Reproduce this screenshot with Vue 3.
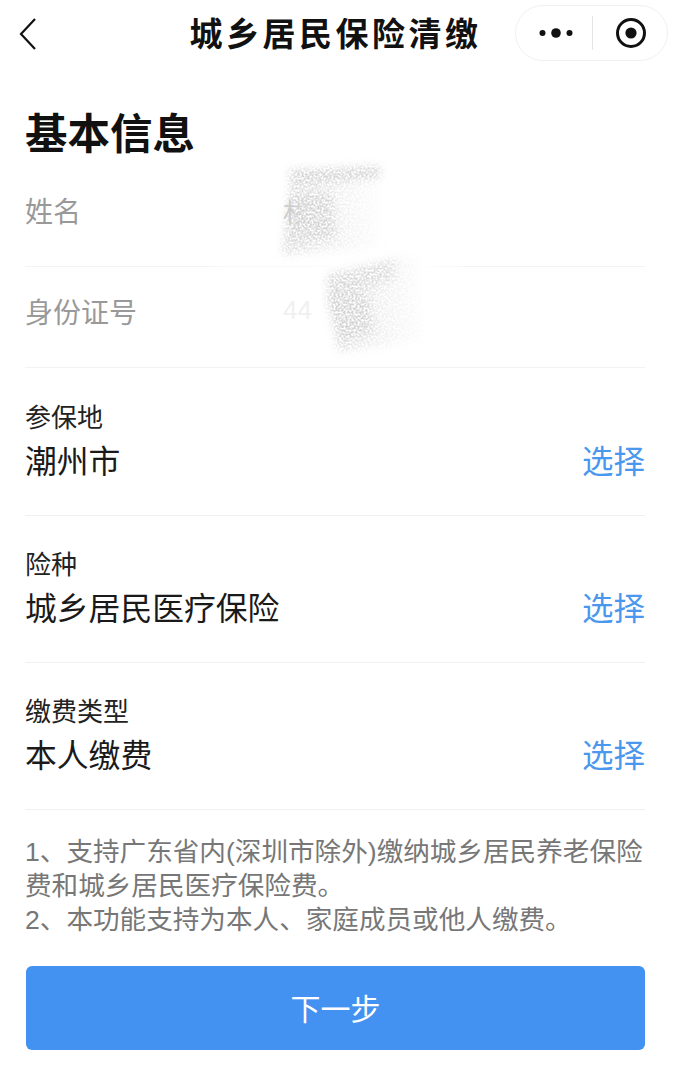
<template>
  <div class="page">
    <div class="nav">
      <svg class="back" width="20" height="34" viewBox="0 0 20 34">
        <path d="M17 2 L3 17 L17 32" fill="none" stroke="#111" stroke-width="2.2" />
      </svg>
      <span class="nav-title">城乡居民保险清缴</span>
      <div class="capsule">
        <svg width="36" height="12" viewBox="0 0 36 12">
          <circle cx="3.5" cy="6" r="3" fill="#111" />
          <circle cx="17" cy="6" r="4.8" fill="#111" />
          <circle cx="30.5" cy="6" r="3" fill="#111" />
        </svg>
        <i class="capsule-line"></i>
        <svg width="32" height="32" viewBox="0 0 32 32">
          <circle cx="16" cy="16" r="13.5" fill="none" stroke="#111" stroke-width="3" />
          <circle cx="16" cy="16" r="5.6" fill="#111" />
        </svg>
      </div>
    </div>

    <div class="content">
      <h1 class="title">基本信息</h1>

      <div class="info-row first">
        <span class="info-label">姓名</span>
        <span class="info-value">杉</span>
      </div>
      <div class="info-row">
        <span class="info-label">身份证号</span>
        <span class="info-value faint">44</span>
      </div>

      <div class="select-list">
        <div v-for="item in selects" :key="item.label" class="select-row">
          <div class="select-text">
            <div class="select-label">{{ item.label }}</div>
            <div class="select-value">{{ item.value }}</div>
          </div>
          <span class="select-btn">选择</span>
        </div>
      </div>

      <div class="notes">
        <p>1、支持广东省内(深圳市除外)缴纳城乡居民养老保险费和城乡居民医疗保险费。</p>
        <p>2、本功能支持为本人、家庭成员或他人缴费。</p>
      </div>

      <div class="next-btn">下一步</div>
    </div>

    <!-- 涂抹遮挡 -->
    <svg class="scribble" width="675" height="400" viewBox="0 0 675 400">
      <defs>
        <filter id="soft" x="-20%" y="-20%" width="140%" height="140%">
          <feGaussianBlur stdDeviation="6" />
        </filter>
        <filter id="grain" x="-10%" y="-10%" width="120%" height="120%">
          <feGaussianBlur stdDeviation="4" result="shape" />
          <feTurbulence type="fractalNoise" baseFrequency="0.5" numOctaves="2" seed="7" result="noise" />
          <feColorMatrix in="noise" type="matrix" values="0 0 0 0 0.62  0 0 0 0 0.62  0 0 0 0 0.62  3.2 0 0 0 -1.05" result="specks" />
          <feComposite in="specks" in2="shape" operator="in" />
        </filter>
        <linearGradient id="fade1" x1="0" x2="1" y1="0" y2="0">
          <stop offset="0" stop-color="#000" stop-opacity="0.8" />
          <stop offset="0.55" stop-color="#000" stop-opacity="0.32" />
          <stop offset="1" stop-color="#000" stop-opacity="0.04" />
        </linearGradient>
      </defs>
      <!-- 白色涂层盖住文字和分割线 -->
      <g filter="url(#soft)" fill="#fff">
        <path d="M300 172 L390 172 L390 256 L300 256 Z" />
        <path d="M215 262 L460 262 L460 270 L215 270 Z" />
        <path d="M318 270 L430 258 L440 345 L335 354 Z" />
      </g>
      <g filter="url(#grain)">
        <path d="M288 170 L380 166 L380 178 L292 184 Z" fill="#000" opacity="0.95" />
        <path d="M290 182 L380 178 L380 248 L282 254 Z" fill="url(#fade1)" />
        <path d="M292 196 L332 192 L336 238 L290 240 Z" fill="#000" opacity="0.8" />
        <path d="M326 278 L416 254 L424 340 L338 352 Z" fill="url(#fade1)" />
        <path d="M328 274 L395 258 L395 280 L332 298 Z" fill="#000" opacity="0.6" />
        <path d="M326 296 L368 294 L374 332 L338 340 Z" fill="#000" opacity="0.8" />
      </g>
    </svg>
  </div>
</template>

<script setup>
const selects = [
  { label: '参保地', value: '潮州市' },
  { label: '险种', value: '城乡居民医疗保险' },
  { label: '缴费类型', value: '本人缴费' },
];
</script>

<style>
html, body {
  margin: 0;
  background: #fff;
}
</style>

<style scoped>
.page {
  position: relative;
  width: 675px;
  height: 1074px;
  overflow: hidden;
  background: #fff;
  font-family: "Liberation Sans", "Noto Sans CJK SC", sans-serif;
}

.nav {
  position: relative;
  height: 68px;
  box-sizing: border-box;
  padding-bottom: 5px;
  display: flex;
  align-items: center;
  justify-content: center;
}

.back {
  position: absolute;
  left: 18px;
  top: 17px;
}

.nav-title {
  margin-right: 4px;
  font-size: 33px;
  font-weight: 700;
  color: #111;
  letter-spacing: 3.5px;
}

.capsule {
  position: absolute;
  left: 515px;
  top: 5px;
  width: 153px;
  height: 56px;
  box-sizing: border-box;
  border: 1px solid #f0f0f0;
  border-radius: 28px;
  display: flex;
  align-items: center;
  padding-left: 23px;
}

.capsule-line {
  width: 1px;
  height: 34px;
  background: #e4e4e4;
  margin: 0 22px 0 17px;
}

.content {
  padding: 0 30px 0 25px;
}

.title {
  margin: 39px 0 0;
  font-size: 42.5px;
  line-height: 56px;
  font-weight: 700;
  color: #111;
}

.info-row {
  height: 101px;
  padding-bottom: 13px;
  display: flex;
  align-items: center;
  border-bottom: 1px solid #f3f3f3;
  box-sizing: border-box;
}

.info-row.first {
  height: 104px;
  padding-bottom: 9px;
}

.info-label {
  width: 258px;
  font-size: 28px;
  color: #999;
}

.info-value {
  font-size: 26px;
  color: #ccc;
}

.info-value.faint {
  color: #f0f0f0;
}

.select-list {
  padding-top: 1px;
}

.select-row {
  height: 147px;
  box-sizing: border-box;
  display: flex;
  align-items: flex-end;
  justify-content: space-between;
  padding-bottom: 33px;
  border-bottom: 1px solid #f0f0f0;
}

.select-label {
  font-size: 26px;
  line-height: 30px;
  color: #222;
}

.select-value {
  margin-top: 9px;
  font-size: 31.8px;
  line-height: 40px;
  color: #1a1a1a;
}

.select-btn {
  font-size: 31.5px;
  line-height: 40px;
  color: #4a97ee;
}

.notes {
  margin-top: 25px;
  font-size: 26.6px;
  line-height: 34px;
  color: #777;
}

.notes p {
  margin: 0;
}

.next-btn {
  margin: 29px 0 0 1px;
  height: 84px;
  box-sizing: border-box;
  padding-bottom: 3px;
  border-radius: 6px;
  background: #4392f1;
  color: #fff;
  font-size: 30px;
  display: flex;
  align-items: center;
  justify-content: center;
}

.scribble {
  position: absolute;
  left: 0;
  top: 0;
  pointer-events: none;
}
</style>
